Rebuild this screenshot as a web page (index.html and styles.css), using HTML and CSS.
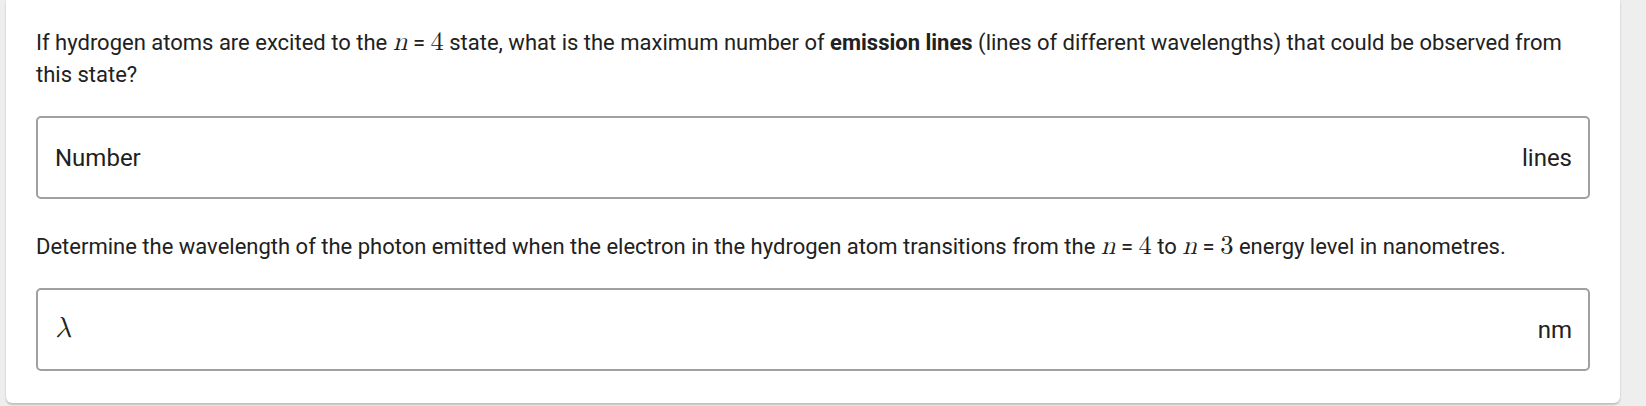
FILE: index.html
```html
<!DOCTYPE html>
<html>
<head>
<meta charset="utf-8">
<link rel="stylesheet" href="styles.css">
</head>
<body>
<div class="card">
  <p class="q">If hydrogen atoms are excited to the <span class="m"><i>n</i></span> = <span class="m">4</span> state, what is the maximum number of <b>emission lines</b> (lines of different wavelengths) that could be observed from this state?</p>
  <div class="field">
    <span class="label">Number</span>
    <span class="unit">lines</span>
  </div>
  <p class="q">Determine the wavelength of the photon emitted when the electron in the hydrogen atom transitions from the <span class="m"><i>n</i></span> = <span class="m">4</span> to <span class="m"><i>n</i></span> = <span class="m">3</span> energy level in nanometres.</p>
  <div class="field">
    <span class="label"><span class="m"><i>λ</i></span></span>
    <span class="unit">nm</span>
  </div>
</div>
</body>
</html>
```
FILE: styles.css
```css
html, body {
  margin: 0;
  padding: 0;
}
body {
  background: #eeeeee;
  font-family: Roboto, "Liberation Sans", sans-serif;
  color: #212121;
  width: 1646px;
  height: 406px;
  overflow: hidden;
}
.card {
  margin: -4px 0 0 6px;
  width: 1614px;
  box-sizing: border-box;
  background: #ffffff;
  border-radius: 6px;
  box-shadow: 0 2px 2px rgba(0,0,0,0.18), 0 0 2px rgba(0,0,0,0.08);
  padding: 31px 30px 32px 30px;
}
.q {
  margin: 0;
  font-size: 22px;
  line-height: 32px;
}
.q b {
  font-weight: 700;
}
.m {
  font-family: "Latin Modern Math", "Liberation Serif", serif;
  font-size: 1.21em;
  line-height: 1;
}
.m i {
  font-style: italic;
}
.field {
  margin: 25px 0 32px 0;
  height: 83px;
  box-sizing: border-box;
  border: 2px solid #a0a0a0;
  border-radius: 5px;
  display: flex;
  align-items: center;
  justify-content: space-between;
  padding: 0 16px 0 17px;
  font-size: 24px;
}
.field:last-child {
  margin-bottom: 0;
}
.label .m {
  font-size: 1.2em;
}
```
